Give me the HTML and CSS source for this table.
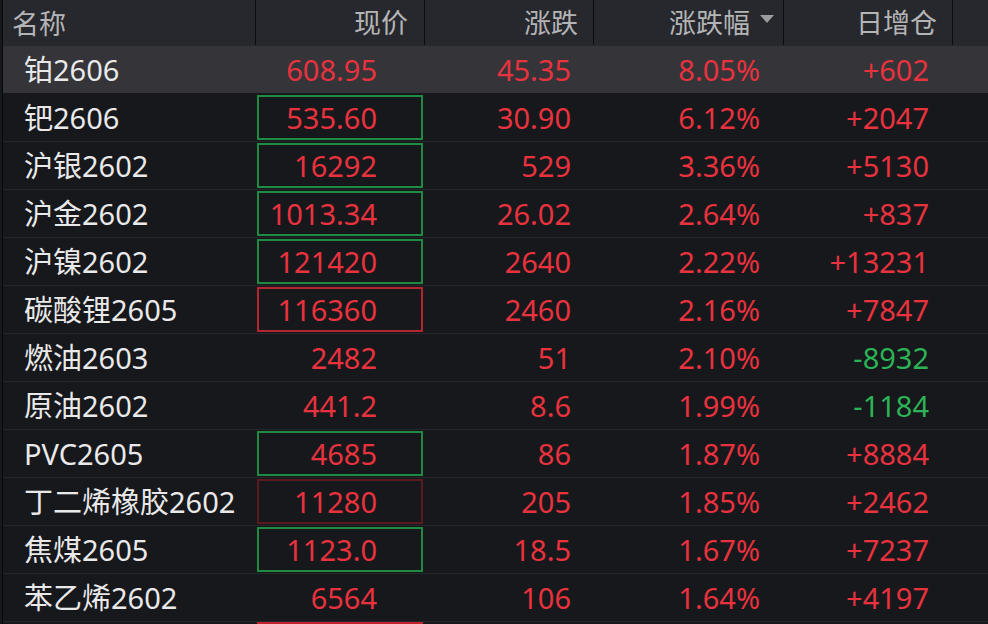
FILE: index.html
```html
<!DOCTYPE html>
<html>
<head>
<meta charset="utf-8">
<link rel="stylesheet" href="styles.css">
</head>
<body>
<div class="table">
  <div class="row head">
    <div class="c name">名称</div>
    <div class="c sep"><span class="ht p1">现价</span></div>
    <div class="c sep"><span class="ht p2">涨跌</span></div>
    <div class="c sep"><span class="ht p3">涨跌幅<span class="arrow"></span></span></div>
    <div class="c sep"><span class="ht p4">日增仓</span></div>
    <div class="c sep"></div>
  </div>
  <div class="row sel">
    <div class="c name">铂2606</div>
    <div class="c price"><span class="box none">608.95</span></div>
    <div class="c chg up">45.35</div>
    <div class="c pct up">8.05%</div>
    <div class="c oi up">+602</div>
    <div class="c"></div>
  </div>
  <div class="row">
    <div class="c name">钯2606</div>
    <div class="c price"><span class="box green">535.60</span></div>
    <div class="c chg up">30.90</div>
    <div class="c pct up">6.12%</div>
    <div class="c oi up">+2047</div>
    <div class="c"></div>
  </div>
  <div class="row">
    <div class="c name">沪银2602</div>
    <div class="c price"><span class="box green">16292</span></div>
    <div class="c chg up">529</div>
    <div class="c pct up">3.36%</div>
    <div class="c oi up">+5130</div>
    <div class="c"></div>
  </div>
  <div class="row">
    <div class="c name">沪金2602</div>
    <div class="c price"><span class="box green">1013.34</span></div>
    <div class="c chg up">26.02</div>
    <div class="c pct up">2.64%</div>
    <div class="c oi up">+837</div>
    <div class="c"></div>
  </div>
  <div class="row">
    <div class="c name">沪镍2602</div>
    <div class="c price"><span class="box green">121420</span></div>
    <div class="c chg up">2640</div>
    <div class="c pct up">2.22%</div>
    <div class="c oi up">+13231</div>
    <div class="c"></div>
  </div>
  <div class="row">
    <div class="c name">碳酸锂2605</div>
    <div class="c price"><span class="box red">116360</span></div>
    <div class="c chg up">2460</div>
    <div class="c pct up">2.16%</div>
    <div class="c oi up">+7847</div>
    <div class="c"></div>
  </div>
  <div class="row">
    <div class="c name">燃油2603</div>
    <div class="c price"><span class="box none">2482</span></div>
    <div class="c chg up">51</div>
    <div class="c pct up">2.10%</div>
    <div class="c oi down">-8932</div>
    <div class="c"></div>
  </div>
  <div class="row">
    <div class="c name">原油2602</div>
    <div class="c price"><span class="box none">441.2</span></div>
    <div class="c chg up">8.6</div>
    <div class="c pct up">1.99%</div>
    <div class="c oi down">-1184</div>
    <div class="c"></div>
  </div>
  <div class="row">
    <div class="c name">PVC2605</div>
    <div class="c price"><span class="box green">4685</span></div>
    <div class="c chg up">86</div>
    <div class="c pct up">1.87%</div>
    <div class="c oi up">+8884</div>
    <div class="c"></div>
  </div>
  <div class="row">
    <div class="c name">丁二烯橡胶2602</div>
    <div class="c price"><span class="box dred">11280</span></div>
    <div class="c chg up">205</div>
    <div class="c pct up">1.85%</div>
    <div class="c oi up">+2462</div>
    <div class="c"></div>
  </div>
  <div class="row">
    <div class="c name">焦煤2605</div>
    <div class="c price"><span class="box green">1123.0</span></div>
    <div class="c chg up">18.5</div>
    <div class="c pct up">1.67%</div>
    <div class="c oi up">+7237</div>
    <div class="c"></div>
  </div>
  <div class="row">
    <div class="c name">苯乙烯2602</div>
    <div class="c price"><span class="box none">6564</span></div>
    <div class="c chg up">106</div>
    <div class="c pct up">1.64%</div>
    <div class="c oi up">+4197</div>
    <div class="c"></div>
  </div>
  <div class="row last">
    <div class="c name"></div>
    <div class="c price"><span class="box redfill"></span></div>
    <div class="c"></div>
    <div class="c"></div>
    <div class="c"></div>
    <div class="c"></div>
  </div>
</div>
</body>
</html>
```
FILE: styles.css
```css
html, body {
  margin: 0;
  padding: 0;
  background: #17181c;
  overflow: hidden;
}
body {
  width: 988px;
  height: 624px;
  font-family: "Noto Sans", "Noto Sans CJK SC", sans-serif;
}
.table {
  border-left: 1px solid #08090b;
  margin-left: 2px;
  height: 624px;
  overflow: hidden;
}
.row {
  display: grid;
  grid-template-columns: 252px 169px 169px 190px 169px 1fr;
  height: 48px;
  box-sizing: border-box;
  border-bottom: 1px solid #25262b;
  align-items: stretch;
}
.row.head {
  height: 46px;
  background: #27282d;
  border-bottom: none;
}
.row.sel {
  background: #343439;
  border-bottom: 1px solid #17181c;
}
.c {
  display: flex;
  align-items: center;
  justify-content: flex-end;
  font-size: 29px;
  line-height: 1;
  box-sizing: border-box;
}
.head .c {
  font-size: 27px;
  color: #b4b4b6;
}
.head .sep {
  border-left: 1px solid #0b0c0f;
  margin-bottom: 1px;
}
.c.name {
  justify-content: flex-start;
  padding-left: 21px;
  color: #e9e9ea;
}
.head .c.name {
  padding-left: 9px;
  color: #b4b4b6;
}
.ht.p1 { margin-right: 16px; }
.ht.p2 { margin-right: 15px; }
.ht.p3 { margin-right: 9px; display: flex; align-items: center; }
.ht.p4 { margin-right: 15px; }
.arrow {
  width: 0;
  height: 0;
  border-left: 7px solid transparent;
  border-right: 7px solid transparent;
  border-top: 8px solid #9c9ca0;
  margin-left: 10px;
  margin-top: -8px;
}
.up { color: #e8323e; }
.down { color: #2bb355; }
.price {
  color: #e8323e;
  padding: 1px 1px 1px 2px;
  align-items: stretch;
}
.box {
  flex: 1;
  display: flex;
  align-items: center;
  justify-content: flex-end;
  padding-right: 44px;
  border: 2px solid transparent;
  box-sizing: border-box;
}
.box.green { border-color: #1f8a42; }
.box.red { border-color: #b3262f; }
.box.dred { border-color: #5c1a1f; }
.row.last .price { padding-top: 0; }
.box.redfill { border-color: #c0222e; border-top-width: 3px; }
.chg { padding-right: 22px; }
.pct { padding-right: 23px; }
.oi { padding-right: 23px; }
```
